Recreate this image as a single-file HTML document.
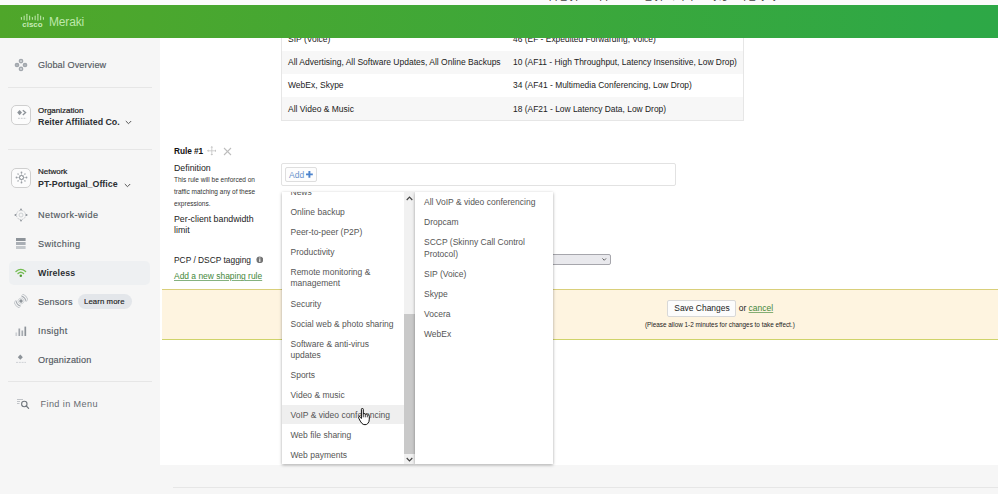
<!DOCTYPE html>
<html lang="en">
<head>
<meta charset="utf-8">
<title>Traffic shaping - Meraki Dashboard</title>
<style>
*{box-sizing:border-box;margin:0;padding:0}
html,body{width:998px;height:494px;overflow:hidden;background:#f6f6f6;font-family:"Liberation Sans",Arial,sans-serif;color:#222;}
.abs{position:absolute}
#top{position:absolute;left:0;top:0;width:998px;height:5px;background:#fbfbfb;overflow:hidden}
#top span{position:absolute;top:-10.2px;left:543px;font-size:10px;color:#333;white-space:nowrap;letter-spacing:.4px;line-height:12px}
#hdr{position:absolute;left:0;top:5px;width:998px;height:33px;background:linear-gradient(90deg,#4fa62a 0%,#4ca72d 12%,#2ea846 95%,#2da846 100%);}
#hdr .meraki{position:absolute;left:49px;top:10.900px;font-size:12px;color:#bde8aa;letter-spacing:-.15px;font-weight:normal;line-height:13px}
#side{position:absolute;left:0;top:38px;width:160px;height:456px;background:#f6f6f6}
#main{position:absolute;left:160px;top:38px;width:838px;height:427px;background:#fff}
#content{position:absolute;left:0;top:0;width:998px;height:494px}
#hdr,#top{z-index:10}
.nav{position:absolute;left:38px;font-size:9.1px;color:#535961;white-space:nowrap;letter-spacing:.1px;-webkit-text-stroke:.15px #535961}
.nav.b{font-weight:bold;color:#2b2f33;-webkit-text-stroke:0;font-size:8.8px}
.hr{position:absolute;left:8px;width:144px;height:1px;background:#e6e6e6}
.small{position:absolute;left:38px;font-size:8px;color:#222;white-space:nowrap;-webkit-text-stroke:.2px #222}
.big{position:absolute;left:38px;font-size:8.85px;font-weight:bold;color:#2b2f33;white-space:nowrap}
.ibox{position:absolute;left:11.4px;width:20px;height:20.5px;border:1.2px solid #cfcfcf;border-radius:5px;background:#fcfcfc}
/* table */
#tbl{position:absolute;left:281px;top:28px;width:463px;height:93px;border:1px solid #e6e6e6;border-top:none;background:#fff}
.row{position:absolute;left:0;width:461px;height:23px;font-size:8.5px;color:#222;white-space:nowrap}
.row.g{background:#f7f7f7}
.row span{position:absolute;top:6.5px}
.row.u span{top:5.9px}
.row .c1{left:6px}
.row .c2{left:231px;font-size:8.43px}
.lbl{position:absolute;left:174px;font-size:8.8px;color:#222;white-space:nowrap}
.tiny{position:absolute;left:174px;font-size:6.5px;color:#333;white-space:nowrap}
.list{position:absolute;left:9px;width:200px}
.list div{font-size:8.5px;color:#555;white-space:nowrap;line-height:11.200px;padding:4.480px 0}
.list.l div{line-height:10.700px;padding:4.730px 0}
</style>
</head>
<body>
<div id="top"><span>app_type=application_type, q=policy;group_by=y</span></div>
<div id="hdr">
  <svg class="abs" style="left:20px;top:0" width="26" height="26" viewBox="0 0 26 26">
    <g stroke="#bfe8ad" stroke-width="1.050" stroke-linecap="round"><line x1="1.40" y1="12.4" x2="1.40" y2="14.3"/><line x1="4.15" y1="10.9" x2="4.15" y2="14.8"/><line x1="6.90" y1="9.2" x2="6.90" y2="15.2"/><line x1="9.65" y1="10.9" x2="9.65" y2="14.8"/><line x1="12.40" y1="12.4" x2="12.40" y2="14.3"/><line x1="15.15" y1="10.9" x2="15.15" y2="14.8"/><line x1="17.90" y1="9.2" x2="17.90" y2="15.2"/><line x1="20.65" y1="10.9" x2="20.65" y2="14.8"/><line x1="23.40" y1="12.4" x2="23.40" y2="14.3"/></g>
    <text x="12.400" y="21.700" font-size="7.900" font-weight="bold" fill="#c8ecb8" text-anchor="middle" font-family="Liberation Sans, sans-serif">cisco</text>
  </svg>
  <div class="meraki">Meraki</div>
</div>

<div id="side">
  <!-- coordinates inside side are page y - 38 -->
  <svg class="abs" style="left:13.700px;top:19.800px" width="14" height="14" viewBox="0 0 14 14"><g fill="#a2a7ad"><circle cx="7" cy="3.100" r="2.350"/><circle cx="3" cy="7" r="2.350"/><circle cx="11" cy="7" r="2.350"/><circle cx="7" cy="10.900" r="2.350"/></g><g fill="#dfe1e4"><circle cx="7" cy="3.100" r=".9"/><circle cx="7" cy="10.900" r=".9"/><circle cx="3" cy="7" r=".5"/><circle cx="11" cy="7" r=".5"/></g></svg>
  <div class="nav" style="top:22px">Global Overview</div>
  <div class="hr" style="top:49px"></div>

  <div class="ibox" style="top:66.600px"></div>
  <svg class="abs" style="left:15.500px;top:70.500px" width="12" height="12" viewBox="0 0 12 12"><path d="M3.600 1 L6 3.600 L3.600 6.200 L1.200 3.600Z" fill="#8d9399"/><path d="M6.800 1.200 L9.600 3.600 L6.800 6" fill="none" stroke="#8d9399" stroke-width="1.300"/><line x1="2" y1="9.300" x2="10.500" y2="9.300" stroke="#c3c7cb" stroke-width="1" stroke-dasharray="1.800 1"/></svg>
  <div class="small" style="top:67.500px">Organization</div>
  <div class="big" style="top:78.700px">Reiter Affiliated Co.</div>
  <svg class="abs" style="left:125px;top:82px" width="7" height="5" viewBox="0 0 7 5"><path d="M.8 1 L3.500 3.700 L6.200 1" fill="none" stroke="#555" stroke-width="1"/></svg>
  <div class="hr" style="top:111px"></div>

  <div class="ibox" style="top:129.600px"></div>
  <svg class="abs" style="left:14.900px;top:133.300px" width="13" height="13" viewBox="0 0 13 13"><g stroke="#b9bdc2" stroke-width=".7"><line x1="6.500" y1="2" x2="6.500" y2="11"/><line x1="2" y1="6.500" x2="11" y2="6.500"/><line x1="3.300" y1="3.300" x2="9.700" y2="9.700"/><line x1="9.700" y1="3.300" x2="3.300" y2="9.700"/></g><circle cx="6.500" cy="6.500" r="2" fill="#fcfcfc" stroke="#80868c" stroke-width="1"/><g fill="#9a9fa5"><circle cx="6.500" cy="1.500" r=".9"/><circle cx="6.500" cy="11.500" r=".9"/><circle cx="1.500" cy="6.500" r=".9"/><circle cx="11.500" cy="6.500" r=".9"/><circle cx="3" cy="3" r=".7"/><circle cx="10" cy="3" r=".7"/><circle cx="3" cy="10" r=".7"/><circle cx="10" cy="10" r=".7"/></g></svg>
  <div class="small" style="top:129px">Network</div>
  <div class="big" style="top:141px">PT-Portugal_Office</div>
  <svg class="abs" style="left:124px;top:145px" width="7" height="5" viewBox="0 0 7 5"><path d="M.8 1 L3.500 3.700 L6.200 1" fill="none" stroke="#555" stroke-width="1"/></svg>

  <svg class="abs" style="left:14px;top:170px" width="14" height="14" viewBox="0 0 14 14"><circle cx="7" cy="7" r="4.600" fill="none" stroke="#b4b8bd" stroke-width=".9" stroke-dasharray="1.400 1"/><circle cx="7" cy="7" r="2" fill="none" stroke="#c4c8cc" stroke-width=".8"/><g fill="#8d9399"><circle cx="7" cy="1.400" r=".9"/><circle cx="7" cy="12.600" r=".9"/><circle cx="1.400" cy="7" r=".9"/><circle cx="12.600" cy="7" r=".9"/></g></svg>
  <div class="nav" style="top:171.500px;letter-spacing:.45px">Network-wide</div>

  <svg class="abs" style="left:16.200px;top:199.800px" width="9.600" height="11" viewBox="0 0 9.600 11"><rect x="0" y="0" width="9.600" height="3" fill="#8d9399"/><rect x="0" y="4" width="9.600" height="3" fill="#a9aeb4"/><rect x="0" y="8" width="9.600" height="3" fill="#c3c7cb"/></svg>
  <div class="nav" style="top:200.700px;letter-spacing:.4px">Switching</div>

  <div class="abs" style="left:9px;top:222.500px;width:141px;height:24px;background:#eef0f2;border-radius:5px"></div>
  <svg class="abs" style="left:15.200px;top:230px" width="11.600" height="9.200" viewBox="0 0 14 11.100"><g fill="none" stroke="#74bd52" stroke-linecap="round"><path d="M1.200 4.300 Q7 -1 12.800 4.300" stroke-width="1.600"/><path d="M3.600 6.700 Q7 3.500 10.400 6.700" stroke-width="1.600"/></g><circle cx="7" cy="9.300" r="1.500" fill="#4f9a30"/></svg>
  <div class="nav b" style="top:230px;letter-spacing:.15px">Wireless</div>

  <svg class="abs" style="left:14px;top:256.300px" width="14" height="14" viewBox="0 0 14 14"><g transform="rotate(-40 7 7)"><circle cx="7" cy="7" r="1.700" fill="#8d9399"/><circle cx="7" cy="7" r="2.900" fill="none" stroke="#c9cdd1" stroke-width=".8"/><g fill="none" stroke="#a6abb1" stroke-width="1" stroke-linecap="round"><path d="M10.800 3.600 Q12.600 7 10.800 10.400"/><path d="M12.600 2.600 Q15 7 12.600 11.400" stroke="#c3c7cb"/><path d="M3.200 3.600 Q1.400 7 3.200 10.400"/><path d="M1.400 2.600 Q-1 7 1.400 11.400" stroke="#c3c7cb"/></g></g></svg>
  <div class="nav" style="top:259px;letter-spacing:.2px">Sensors</div>
  <div class="abs" style="left:77.500px;top:256px;width:54.500px;height:15px;border-radius:7.500px;background:#e3e6ea"></div>
  <div class="abs" style="left:84px;top:259.200px;font-size:7.750px;color:#222;white-space:nowrap;letter-spacing:.1px;-webkit-text-stroke:.15px #222">Learn more</div>

  <svg class="abs" style="left:15px;top:287px" width="12" height="12" viewBox="0 0 12 12"><g stroke-width="1.700"><line x1="1.300" y1="7.500" x2="1.300" y2="11" stroke="#cdd0d4"/><line x1="4.300" y1="3.500" x2="4.300" y2="11" stroke="#a0a5ab"/><line x1="7.300" y1="5.500" x2="7.300" y2="11" stroke="#a6abb1"/><line x1="10.300" y1="1.600" x2="10.300" y2="11" stroke="#8d9399"/></g></svg>
  <div class="nav" style="top:288px;letter-spacing:.4px">Insight</div>

  <svg class="abs" style="left:15px;top:315px" width="12" height="12" viewBox="0 0 12 12"><path d="M5.300 1.600 L7.800 4.200 L5.300 6.800 L2.800 4.200Z" fill="#8d9399"/><line x1="1" y1="9.400" x2="11" y2="9.400" stroke="#cfd2d6" stroke-width="1" stroke-dasharray="2 .8"/></svg>
  <div class="nav" style="top:317.200px;letter-spacing:.15px">Organization</div>

  <div class="hr" style="top:343px"></div>
  <svg class="abs" style="left:16px;top:360px" width="14" height="12" viewBox="0 0 14 12"><g stroke="#b4b8bd" stroke-width=".8"><line x1="1" y1="1.500" x2="7" y2="1.500"/><line x1="1" y1="3.500" x2="4" y2="3.500"/><line x1="1" y1="5.500" x2="3.500" y2="5.500"/></g><circle cx="8.300" cy="6" r="2.700" fill="none" stroke="#70767c" stroke-width="1.100"/><line x1="10.300" y1="8" x2="12.600" y2="10.300" stroke="#70767c" stroke-width="1.200" stroke-linecap="round"/></svg>
  <div class="nav" style="left:40.500px;top:361.300px;letter-spacing:.4px;color:#666b71;-webkit-text-stroke:0">Find in Menu</div>
</div>

<div class="abs" style="left:173px;top:487px;width:825px;height:1px;background:#e6e6e6"></div>

<div id="main"></div>
<div id="content">
  <div id="tbl">
    <div class="row u" style="top:0"><span class="c1">SIP (Voice)</span><span class="c2">46 (EF - Expedited Forwarding, Voice)</span></div>
    <div class="row g u" style="top:23px"><span class="c1">All Advertising, All Software Updates, All Online Backups</span><span class="c2">10 (AF11 - High Throughput, Latency Insensitive, Low Drop)</span></div>
    <div class="row u" style="top:46px"><span class="c1">WebEx, Skype</span><span class="c2">34 (AF41 - Multimedia Conferencing, Low Drop)</span></div>
    <div class="row g" style="top:69px"><span class="c1">All Video &amp; Music</span><span class="c2">18 (AF21 - Low Latency Data, Low Drop)</span></div>
  </div>

  <div class="lbl" style="top:145.800px;font-weight:bold;font-size:8.300px;color:#111;letter-spacing:-.05px">Rule #1</div>
  <svg class="abs" style="left:206.700px;top:146px" width="9.600" height="9.600" viewBox="0 0 11 11"><g stroke="#c2c2c2" stroke-width=".9" fill="none"><line x1="5.500" y1="1" x2="5.500" y2="10"/><line x1="1" y1="5.500" x2="10" y2="5.500"/></g><g fill="#c2c2c2"><path d="M5.500 0 L7 1.800 L4 1.800Z"/><path d="M5.500 11 L7 9.200 L4 9.200Z"/><path d="M0 5.500 L1.800 4 L1.800 7Z"/><path d="M11 5.500 L9.200 4 L9.200 7Z"/></g></svg>
  <svg class="abs" style="left:223px;top:146.500px" width="9" height="9" viewBox="0 0 9 9"><g stroke="#bdbdbd" stroke-width="1.100"><line x1="1" y1="1" x2="8" y2="8"/><line x1="8" y1="1" x2="1" y2="8"/></g></svg>

  <div class="lbl" style="top:162.800px">Definition</div>
  <div class="tiny" style="top:176px">This rule will be enforced on</div>
  <div class="tiny" style="top:187.500px">traffic matching any of these</div>
  <div class="tiny" style="top:199.800px">expressions.</div>
  <div class="lbl" style="top:213.600px">Per-client bandwidth</div>
  <div class="lbl" style="top:225.300px">limit</div>
  <div class="lbl" style="top:254.600px;font-size:8.400px">PCP / DSCP tagging</div>
  <svg class="abs" style="left:255.800px;top:255.900px" width="7.600" height="7.600" viewBox="0 0 8 8"><circle cx="4" cy="4" r="3.600" fill="#757575"/><rect x="3.400" y="3.300" width="1.200" height="2.900" fill="#fff"/><rect x="3.400" y="1.600" width="1.200" height="1.100" fill="#fff"/></svg>
  <div class="lbl" style="top:271.200px;color:#44883a;text-decoration:underline;text-decoration-thickness:.7px;text-decoration-color:rgba(68,136,58,.65);font-size:8.450px">Add a new shaping rule</div>

  <!-- definition input -->
  <div class="abs" style="left:281px;top:162.700px;width:395px;height:23.600px;border:1px solid #e2e2e2;border-radius:2px;background:#fff"></div>
  <div class="abs" style="left:285px;top:166.800px;width:31.500px;height:15.400px;border:1px solid #dedede;border-radius:2px;background:#fdfdfd"></div>
  <div class="abs" style="left:289px;top:170px;font-size:8.500px;color:#6a93cc;white-space:nowrap">Add</div>
  <svg class="abs" style="left:306px;top:170.800px" width="6.800" height="6.800" viewBox="0 0 7 7"><path d="M2.500 0h2v2.500H7v2H4.500V7h-2V4.500H0v-2h2.500z" fill="#4c83cc"/></svg>

  <!-- select -->
  <div class="abs" style="left:540px;top:254px;width:70.500px;height:11px;border:1px solid #a6a6ac;border-radius:2px;background:#e9e9ed"></div>
  <svg class="abs" style="left:602px;top:258.200px" width="4.500" height="3" viewBox="0 0 6 4"><path d="M.6 .6 L3 3 L5.400 .6" fill="none" stroke="#333" stroke-width="1"/></svg>

  <!-- yellow bar -->
  <div class="abs" style="left:161.500px;top:289px;width:837px;height:51px;background:#fef4e0;border-top:1px solid #d9cf7a;border-bottom:1.300px solid #cfd36a"></div>
  <div class="abs" style="left:667.200px;top:300px;width:69.300px;height:16.600px;border:1px solid #d8d8d8;border-radius:2px;background:#fcfcfc"></div>
  <div class="abs" style="left:674.300px;top:303.300px;font-size:8.450px;color:#222;white-space:nowrap">Save Changes</div>
  <div class="abs" style="left:738.700px;top:303.300px;font-size:8.500px;color:#222;white-space:nowrap">or <span style="color:#44883a;text-decoration:underline;text-decoration-thickness:.7px;text-decoration-color:rgba(68,136,58,.65)">cancel</span></div>
  <div class="abs" style="left:645px;top:321.200px;font-size:6.370px;color:#222;white-space:nowrap">(Please allow 1-2 minutes for changes to take effect.)</div>

  <!-- dropdown left panel -->
  <div class="abs" id="dl" style="left:281.500px;top:192.300px;width:133px;height:272px;background:#fff;box-shadow:0 1px 3px rgba(0,0,0,.35);overflow:hidden">
    <div class="abs" style="left:0;top:212.900px;width:122px;height:19px;background:#efefef"></div>
    <div class="list l" style="top:-9.900px">
      <div>News</div>
      <div>Online backup</div>
      <div>Peer-to-peer (P2P)</div>
      <div style="position:relative;top:-1px">Productivity</div>
      <div><span style="position:relative;top:-1px">Remote monitoring &amp;</span><br>management</div>
      <div>Security</div>
      <div>Social web &amp; photo sharing</div>
      <div>Software &amp; anti-virus<br>updates</div>
      <div>Sports</div>
      <div>Video &amp; music</div>
      <div>VoIP &amp; video conferencing</div>
      <div>Web file sharing</div>
      <div>Web payments</div>
    </div>
    <!-- scrollbar -->
    <div class="abs" style="left:122px;top:0;width:11px;height:273px;background:#f1f1f1"></div>
    <div class="abs" style="left:122px;top:121.700px;width:11px;height:139.600px;background:#c9c9c9"></div>
    <svg class="abs" style="left:124px;top:3.500px" width="7" height="5" viewBox="0 0 7 5"><path d="M.7 4 L3.500 1.200 L6.300 4" fill="none" stroke="#444" stroke-width="1.200"/></svg>
    <svg class="abs" style="left:124px;top:265px" width="7" height="5" viewBox="0 0 7 5"><path d="M.7 1 L3.500 3.800 L6.300 1" fill="none" stroke="#444" stroke-width="1.200"/></svg>
  </div>
  <!-- dropdown right panel -->
  <div class="abs" id="dr" style="left:415px;top:192.300px;width:138px;height:272px;background:#fff;box-shadow:0 1px 3px rgba(0,0,0,.35);overflow:hidden">
    <div class="list" style="top:0.3px">
      <div>All VoIP &amp; video conferencing</div>
      <div>Dropcam</div>
      <div>SCCP (Skinny Call Control<br>Protocol)</div>
      <div>SIP (Voice)</div>
      <div>Skype</div>
      <div>Vocera</div>
      <div>WebEx</div>
    </div>
  </div>

  <!-- hand cursor -->
  <svg class="abs" style="left:358px;top:407.600px" width="13" height="18" viewBox="0 0 13 18"><path d="M3.400 1.300 Q3.400 .4 4.300 .4 Q5.300 .4 5.300 1.300 L5.300 6.200 Q5.500 5.400 6.400 5.500 Q7.300 5.600 7.300 6.600 Q7.600 5.900 8.400 6.100 Q9.200 6.300 9.300 7.200 Q9.700 6.700 10.400 6.900 Q11.300 7.200 11.300 8.200 L11.300 11.200 Q11.300 14 9.800 15.500 Q8.800 16.700 7 16.700 Q5 16.700 3.800 15.300 Q2.300 13.500 .8 10.300 Q.2 9 1 8.600 Q1.900 8.300 2.700 9.500 L3.400 10.500Z" fill="#fff" stroke="#111" stroke-width="1" stroke-linejoin="round"/><g stroke="#111" stroke-width=".8"><line x1="5.300" y1="6.200" x2="5.300" y2="9.300"/><line x1="7.300" y1="6.800" x2="7.300" y2="9.300"/><line x1="9.300" y1="7.400" x2="9.300" y2="9.300"/></g></svg>
</div>
</body>
</html>
